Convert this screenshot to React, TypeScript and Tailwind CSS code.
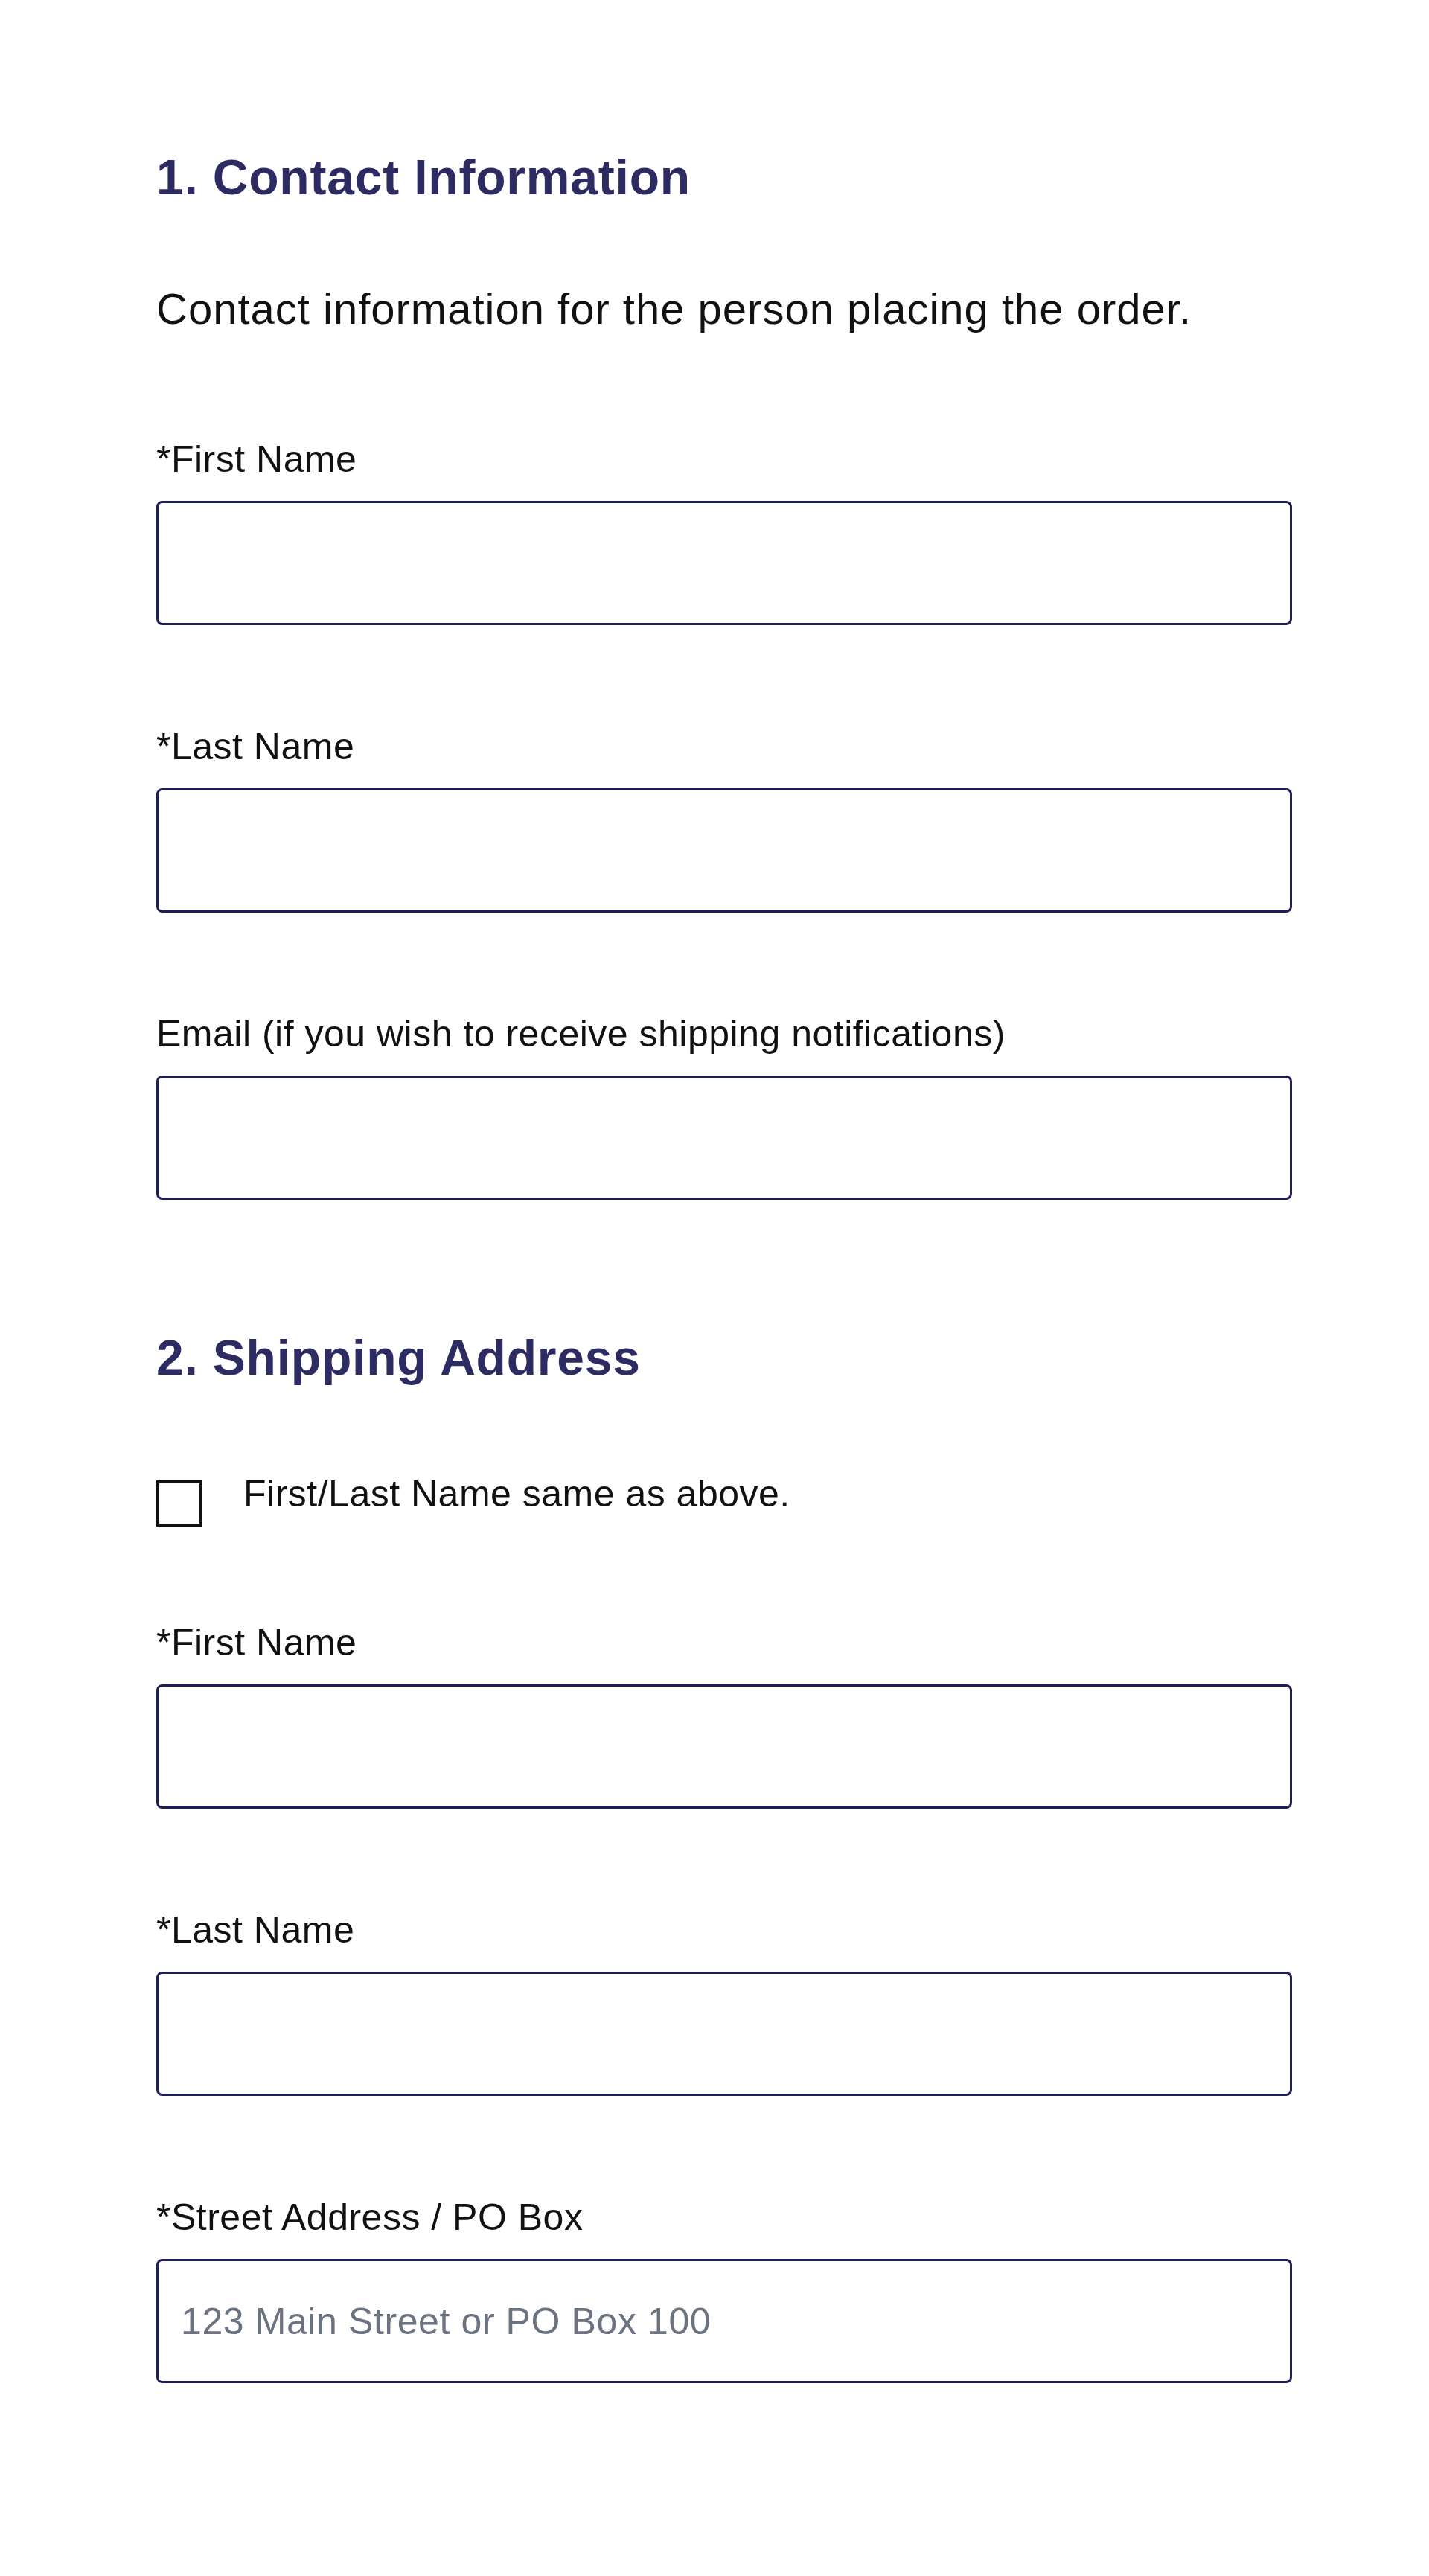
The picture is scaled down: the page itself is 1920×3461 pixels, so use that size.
const fields1 = [
  { id: "first", label: "*First Name" },
  { id: "last", label: "*Last Name" },
  { id: "email", label: "Email (if you wish to receive shipping notifications)" },
];

const fields2 = [
  { id: "ship-first", label: "*First Name" },
  { id: "ship-last", label: "*Last Name" },
  { id: "street", label: "*Street Address / PO Box", placeholder: "123 Main Street or PO Box 100" },
];

function Field({ id, label, placeholder, first }: { id: string; label: string; placeholder?: string; first?: boolean }) {
  return (
    <div className={first ? "" : "mt-[133px]"}>
      <label htmlFor={id} className="block text-[50px] leading-[60px] tracking-[0.5px] text-[#111111]">
        {label}
      </label>
      <input
        id={id}
        type="text"
        placeholder={placeholder}
        className="mt-[26px] block h-[167px] w-full rounded-[8px] border-[3px] border-[#1d1d58] bg-white px-[30px] text-[50px] tracking-[0.6px] text-[#111111] outline-none placeholder:text-[#6b7280]"
      />
    </div>
  );
}

export default function App() {
  return (
    <div className="min-h-[3461px] bg-white px-[210px] pt-[200px] font-['Liberation_Sans',Arial,sans-serif]">
      <div className="w-[1526px]">
        <h2 className="text-[66px] font-bold leading-[76px] tracking-[0.8px] text-[#2d2c62]">1. Contact Information</h2>
        <p className="mt-[104px] text-[58px] leading-[70px] tracking-[1px] text-[#111111]">
          Contact information for the person placing the order.
        </p>

        <div className="mt-[137px]">
          {fields1.map((f, i) => (
            <Field key={f.id} id={f.id} label={f.label} first={i === 0} />
          ))}
        </div>

        <h2 className="mt-[174px] text-[66px] font-bold leading-[76px] tracking-[0.8px] text-[#2d2c62]">2. Shipping Address</h2>

        <label className="mt-[115px] flex items-start gap-[55px]">
          <span className="mt-[12px] block h-[62px] w-[62px] shrink-0 border-[4px] border-[#111111] bg-white" />
          <span className="text-[50px] leading-[60px] tracking-[0.5px] text-[#111111]">First/Last Name same as above.</span>
        </label>

        <div className="mt-[126px]">
          {fields2.map((f, i) => (
            <Field key={f.id} id={f.id} label={f.label} placeholder={f.placeholder} first={i === 0} />
          ))}
        </div>
      </div>
    </div>
  );
}
